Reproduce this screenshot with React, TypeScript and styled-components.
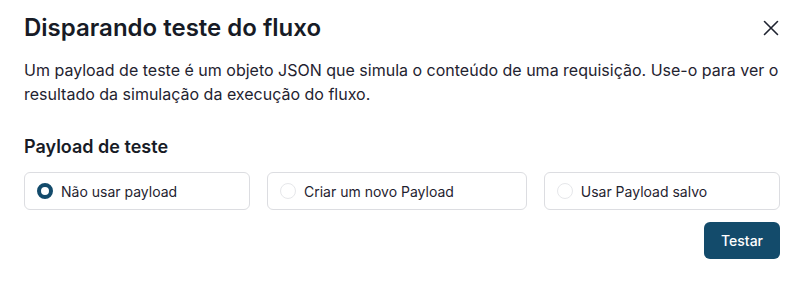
import React, { useState } from "react";
import styled, { createGlobalStyle } from "styled-components";

const Global = createGlobalStyle`
  html, body { margin: 0; padding: 0; background: #ffffff; }
  body { font-family: Inter, "Noto Sans", sans-serif; color: #1b1f2a; -webkit-font-smoothing: antialiased; }
  * { box-sizing: border-box; }
`;

const Dialog = styled.div`
  width: 802px;
  height: 284px;
  padding: 12px 22px 0 24px;
  position: relative;
  background: #fff;
`;

const Header = styled.div`
  display: flex;
  align-items: center;
  justify-content: space-between;
  height: 32px;
`;

const Title = styled.h2`
  margin: 0;
  font-size: 24px;
  font-weight: 600;
  line-height: 32px;
  color: #171b26;
`;

const CloseButton = styled.button`
  border: none;
  background: transparent;
  padding: 0;
  width: 18px;
  height: 18px;
  display: flex;
  align-items: center;
  justify-content: center;
  cursor: pointer;
  color: #1f2330;
`;

const Description = styled.p`
  margin: 14px 0 0;
  font-size: 16px;
  line-height: 24px;
  color: #1f2330;
`;

const SectionTitle = styled.h3`
  margin: 29px 0 0;
  font-size: 18px;
  font-weight: 600;
  line-height: 24px;
  color: #171b26;
`;

const Options = styled.div`
  display: flex;
  gap: 17px;
  margin-top: 13px;
`;

const Option = styled.label`
  flex: 1 1 auto;
  display: flex;
  align-items: center;
  gap: 8px;
  height: 38px;
  padding: 0 12px;
  border: 1px solid #dcdde1;
  border-radius: 6px;
  font-size: 14px;
  color: #1f2330;
  cursor: pointer;
  white-space: nowrap;
`;

const Radio = styled.span<{ $checked: boolean }>`
  width: 16px;
  height: 16px;
  border-radius: 50%;
  flex: none;
  background: #fff;
  border: ${(p) => (p.$checked ? "4.5px solid #134b6b" : "1px solid #e6e7ea")};
`;

const Footer = styled.div`
  display: flex;
  justify-content: flex-end;
  margin-top: 12px;
`;

const PrimaryButton = styled.button`
  height: 37px;
  width: 76px;
  border: none;
  border-radius: 6px;
  background: #134b6b;
  color: #ffffff;
  font-family: Inter, "Noto Sans", sans-serif;
  font-size: 14px;
  font-weight: 500;
  cursor: pointer;
`;

const options = ["Não usar payload", "Criar um novo Payload", "Usar Payload salvo"];

export default function App() {
  const [selected, setSelected] = useState(0);
  return (
    <>
      <Global />
      <Dialog>
        <Header>
          <Title>Disparando teste do fluxo</Title>
          <CloseButton aria-label="Fechar">
            <svg width="16" height="16" viewBox="0 0 16 16" fill="none">
              <path d="M1.5 1.5L14.5 14.5M14.5 1.5L1.5 14.5" stroke="currentColor" strokeWidth="1.6" strokeLinecap="round" />
            </svg>
          </CloseButton>
        </Header>
        <Description>
          Um payload de teste é um objeto JSON que simula o conteúdo de uma requisição. Use-o para ver o
          resultado da simulação da execução do fluxo.
        </Description>
        <SectionTitle>Payload de teste</SectionTitle>
        <Options>
          {options.map((o, i) => (
            <Option key={o} onClick={() => setSelected(i)}>
              <Radio $checked={selected === i} />
              {o}
            </Option>
          ))}
        </Options>
        <Footer>
          <PrimaryButton>Testar</PrimaryButton>
        </Footer>
      </Dialog>
    </>
  );
}
